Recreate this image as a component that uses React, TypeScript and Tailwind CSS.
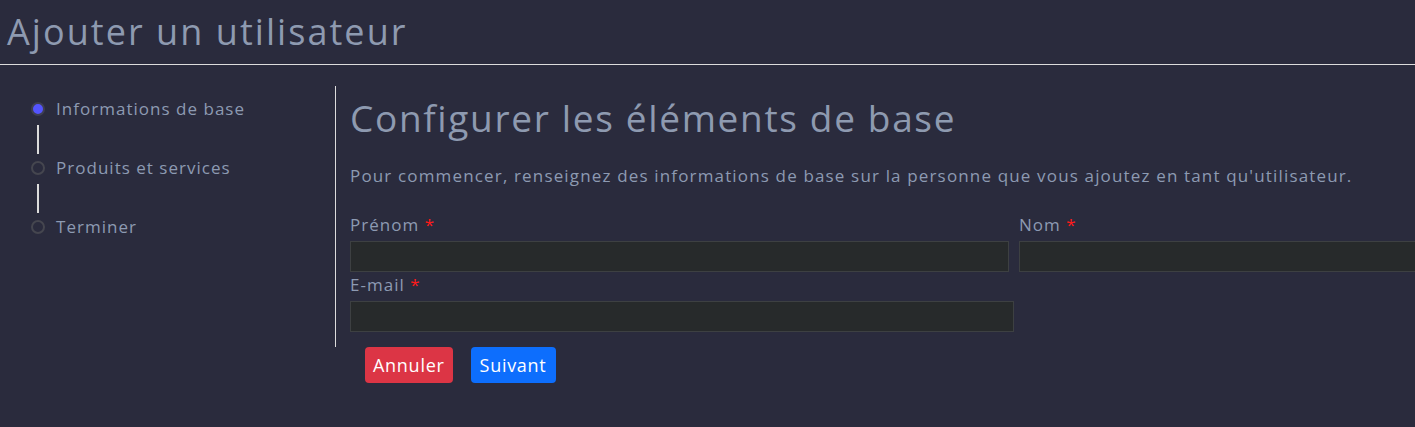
const steps = [
  { label: "Informations de base", active: true },
  { label: "Produits et services", active: false },
  { label: "Terminer", active: false },
];

const font = "font-['Open_Sans',sans-serif]";

const Field = ({ label, className }: { label: string; className: string }) => (
  <div className={className}>
    <label className="block h-[24px] text-[17px] leading-[24px] tracking-[0.06em] text-[#8d9ab2]">
      {label} <span className="text-[#ff1a1a]">*</span>
    </label>
    <input className="mt-[4px] block h-[31px] w-full border border-[#3d4042] bg-[#272a2b] outline-none" />
  </div>
);

const App = () => {
  return (
    <div className={`min-h-[427px] bg-[#2a2b3d] ${font}`}>
      <header className="flex h-[65px] items-center border-b border-[#dcdcdc] pl-[7px]">
        <h1 className="text-[36px] leading-none tracking-[0.057em] text-[#8e9ab0]">Ajouter un utilisateur</h1>
      </header>

      <div className="flex pt-[21px]">
        <aside className="w-[335px] shrink-0 pl-[31px] pt-[11px]">
          {steps.map((s, i) => (
            <div key={s.label}>
              <div className="flex h-[24px] items-center gap-[11px]">
                <span
                  className={
                    s.active
                      ? "h-[14px] w-[14px] rounded-full border-2 border-[#3e3f52] bg-[#5454ff]"
                      : "h-[14px] w-[14px] rounded-full border-2 border-[#45464f]"
                  }
                />
                <span className="text-[17px] tracking-[0.06em] text-[#8d9ab2]">{s.label}</span>
              </div>
              {i < steps.length - 1 && <div className="mb-[2px] ml-[6px] mt-[4px] h-[29px] w-[2px] bg-[#dcdcdc]" />}
            </div>
          ))}
        </aside>

        <main className="min-w-0 flex-1 overflow-hidden border-l border-[#dcdcdc] pb-[15px] pl-[14px] pt-[9px]">
          <h2 className="text-[37px] leading-[46px] tracking-[0.045em] text-[#8e9ab0]">Configurer les éléments de base</h2>
          <p className="mt-[23px] text-[17px] leading-[24px] tracking-[0.068em] text-[#8d9ab2]">
            Pour commencer, renseignez des informations de base sur la personne que vous ajoutez en tant qu'utilisateur.
          </p>
          <div className="mt-[25px] flex gap-[10px]">
            <Field label="Prénom" className="w-[659px] shrink-0" />
            <Field label="Nom" className="w-[420px] shrink-0" />
          </div>
          <Field label="E-mail" className="mt-[1px] w-[664px]" />
        </main>
      </div>

      <div className="flex gap-[18px] pl-[365px]">
        <button className="h-[36px] rounded-[4px] bg-[#dc3545] px-[8px] text-[18px] tracking-[0.04em] text-white">Annuler</button>
        <button className="h-[36px] rounded-[4px] bg-[#0d6efd] px-[9px] text-[18px] tracking-[0.04em] text-white">Suivant</button>
      </div>
    </div>
  );
};

export default App;
